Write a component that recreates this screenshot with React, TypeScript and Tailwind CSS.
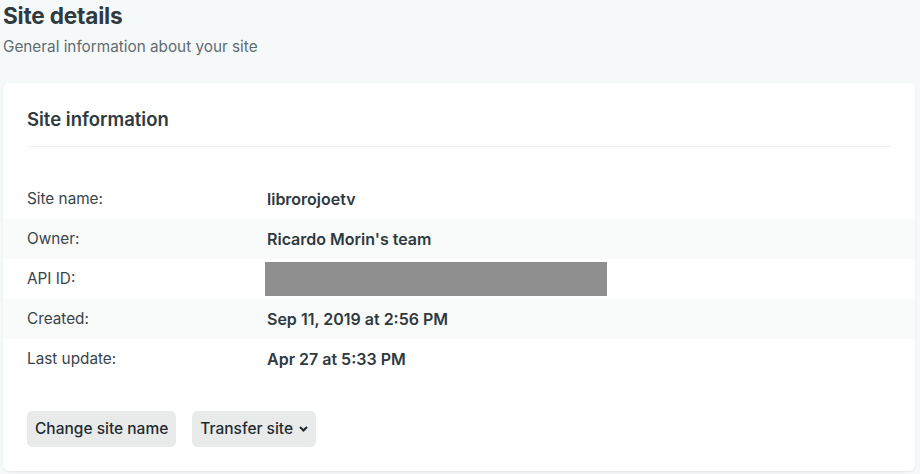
const rows: { label: string; value?: string; redacted?: boolean }[] = [
  { label: "Site name:", value: "librorojoetv" },
  { label: "Owner:", value: "Ricardo Morin's team" },
  { label: "API ID:", redacted: true },
  { label: "Created:", value: "Sep 11, 2019 at 2:56 PM" },
  { label: "Last update:", value: "Apr 27 at 5:33 PM" },
];

export default function App() {
  return (
    <div className="min-h-[474px] w-[920px] bg-[#f6f9fa] font-['Inter',sans-serif] text-[#2e3a40]">
      <div className="px-[3px]">
        <h1 className="text-[22.6px] font-bold leading-[32px] tracking-[-0.2px]">Site details</h1>
        <p className="mt-[4px] text-[15.3px] leading-[22px] text-[#5f6b71]">
          General information about your site
        </p>
      </div>

      <div className="ml-[3px] mt-[25px] w-[912px] rounded-[6px] bg-white pb-6 pt-6 shadow-[0_1px_2px_rgba(0,0,0,0.08)]">
        <div className="mx-6 border-b border-[#eef0f1] pb-[15px]">
          <h2 className="text-[18.5px] font-semibold leading-6">Site information</h2>
        </div>

        <div className="mt-8">
          {rows.map((row, i) => (
            <div
              key={row.label}
              className={`flex h-10 items-center px-6 ${i % 2 === 1 ? "bg-[#f9fafa]" : ""}`}
            >
              <div className="w-[240px] text-[15.3px] text-[#37444a]">{row.label}</div>
              {row.redacted ? (
                <div className="-ml-[2px] h-[34px] w-[342px] bg-[#8f8f8f]" />
              ) : (
                <div className="text-[16px] font-semibold">{row.value}</div>
              )}
            </div>
          ))}
        </div>

        <div className="mx-6 mt-8 flex gap-4">
          <button className="h-9 rounded-[5px] bg-[#e9ebeb] px-2 text-[15.5px] font-medium text-[#1f2a30]">
            Change site name
          </button>
          <button className="flex h-9 items-center gap-[6px] rounded-[5px] bg-[#e9ebeb] px-2 text-[15.5px] font-medium text-[#1f2a30]">
            Transfer site
            <svg width="9" height="7" viewBox="0 0 9 7" fill="currentColor">
              <path d="M0.3 1.8 L1.8 0.3 L4.5 3 L7.2 0.3 L8.7 1.8 L4.5 6 Z" />
            </svg>
          </button>
        </div>
      </div>
    </div>
  );
}
